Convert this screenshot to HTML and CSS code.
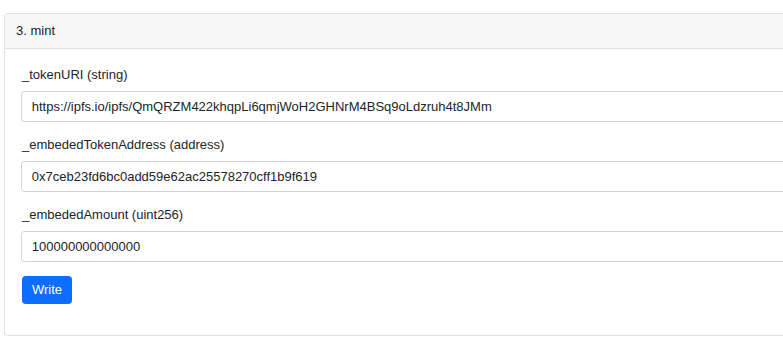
FILE: index.html
```html
<!DOCTYPE html>
<html lang="en">
<head>
<meta charset="utf-8">
<title>mint</title>
<link rel="stylesheet" href="styles.css">
</head>
<body>
<div class="page">
  <div class="card">
    <div class="card-header">3. mint</div>
    <div class="card-body">
      <form class="form">
        <div class="field">
          <label class="label">_tokenURI (string)</label>
          <input class="control" type="text" value="https://ipfs.io/ipfs/QmQRZM422khqpLi6qmjWoH2GHNrM4BSq9oLdzruh4t8JMm">
        </div>
        <div class="field">
          <label class="label">_embededTokenAddress (address)</label>
          <input class="control" type="text" value="0x7ceb23fd6bc0add59e62ac25578270cff1b9f619">
        </div>
        <div class="field">
          <label class="label">_embededAmount (uint256)</label>
          <input class="control" type="text" value="100000000000000">
        </div>
        <div class="actions">
          <button class="btn" type="button">Write</button>
        </div>
      </form>
    </div>
  </div>
</div>
</body>
</html>
```
FILE: styles.css
```css
html, body {
  margin: 0;
  padding: 0;
  background: #ffffff;
  overflow: hidden;
}

body {
  font-family: "Liberation Sans", Arial, Helvetica, sans-serif;
  font-size: 13px;
  line-height: 1.5;
  color: #212529;
}

.page {
  padding: 13px 0 0 4px;
}

.card {
  width: 920px;
  border: 1px solid #dfdfdf;
  border-radius: 4px;
  background: #ffffff;
}

.card-header {
  padding: 7px 11px;
  line-height: 20px;
  background: #f7f7f7;
  border-bottom: 1px solid #dfdfdf;
  border-radius: 3px 3px 0 0;
}

.card-body {
  padding: 16px 16px 18px 16px;
}

.form {
  display: flex;
  flex-direction: column;
  gap: 13px;
}

.field {
  display: flex;
  flex-direction: column;
}

.label {
  display: block;
  line-height: 19.5px;
  margin-bottom: 6.5px;
  padding-left: 1px;
}

.control {
  display: block;
  box-sizing: border-box;
  width: 100%;
  height: 31px;
  padding: 4.875px 9.75px;
  font-family: inherit;
  font-size: 13px;
  line-height: 19.5px;
  color: #212529;
  background: #ffffff;
  border: 1px solid #ced4da;
  border-radius: 3.25px;
  margin: 0;
}

.actions {
  display: flex;
  padding-top: 1px;
  padding-left: 1px;
  padding-bottom: 13px;
}

.btn {
  box-sizing: border-box;
  height: 28px;
  padding: 0 9px;
  font-family: inherit;
  font-size: 13px;
  line-height: 26px;
  color: #ffffff;
  background: #0d6efd;
  border: 1px solid #0d6efd;
  border-radius: 3.25px;
  cursor: pointer;
}
```
